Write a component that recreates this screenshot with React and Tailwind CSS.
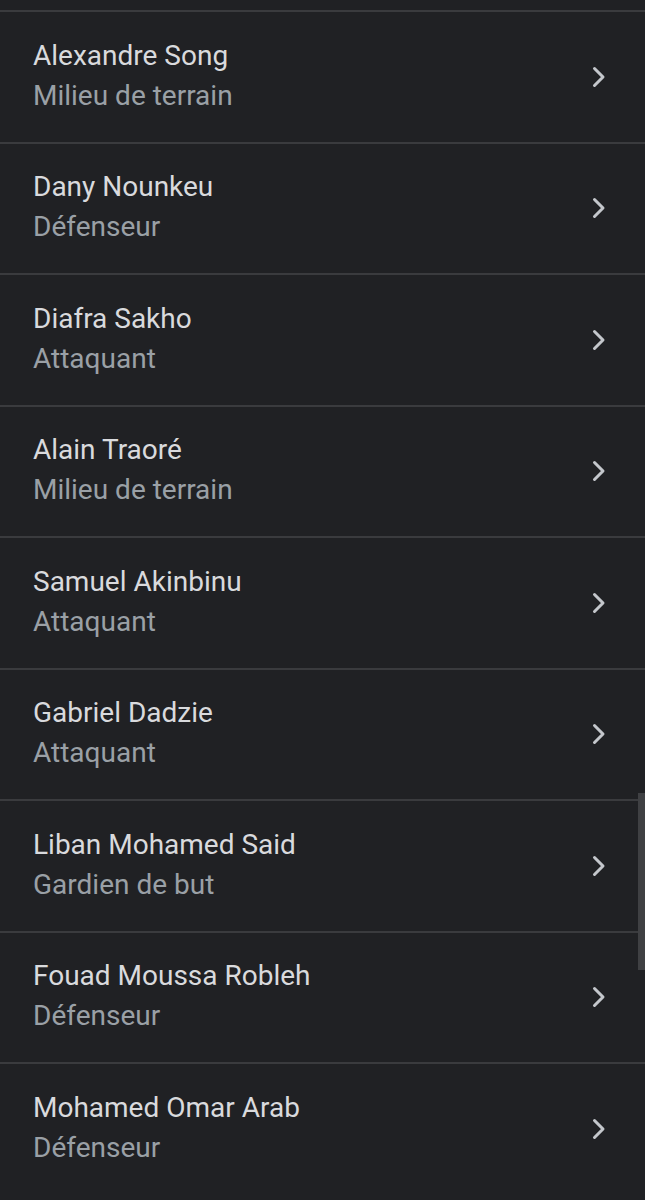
const players = [
  { name: 'Alexandre Song', role: 'Milieu de terrain' },
  { name: 'Dany Nounkeu', role: 'Défenseur' },
  { name: 'Diafra Sakho', role: 'Attaquant' },
  { name: 'Alain Traoré', role: 'Milieu de terrain' },
  { name: 'Samuel Akinbinu', role: 'Attaquant' },
  { name: 'Gabriel Dadzie', role: 'Attaquant' },
  { name: 'Liban Mohamed Said', role: 'Gardien de but' },
  { name: 'Fouad Moussa Robleh', role: 'Défenseur' },
  { name: 'Mohamed Omar Arab', role: 'Défenseur' },
]

function Chevron() {
  return (
    <svg width="18" height="24" viewBox="0 0 18 24" fill="none" stroke="#c4c7cc" strokeWidth="3" strokeLinecap="round" strokeLinejoin="round">
      <polyline points="4.5,3.5 13,12 4.5,20.5" />
    </svg>
  )
}

export default function App() {
  return (
    <div className="relative w-[645px] h-[1200px] overflow-hidden bg-[#202124] font-['Roboto',sans-serif]">
      <div className="pt-[10px]">
        {players.map(p => (
          <div key={p.name} className="h-[131.5px] border-t-2 border-[#3a3b3e] flex items-center pl-[33px] pr-[37px]">
            <div className="flex-1 pb-[2px]">
              <div className="text-[28px] leading-[40px] text-[#d9dadd]">{p.name}</div>
              <div className="text-[28px] leading-[40px] text-[#9aa0a6]">{p.role}</div>
            </div>
            <Chevron />
          </div>
        ))}
      </div>
      {/* scrollbar */}
      <div className="absolute right-0 top-[793px] w-[7px] h-[177px] bg-[#3f4043]" />
    </div>
  )
}
